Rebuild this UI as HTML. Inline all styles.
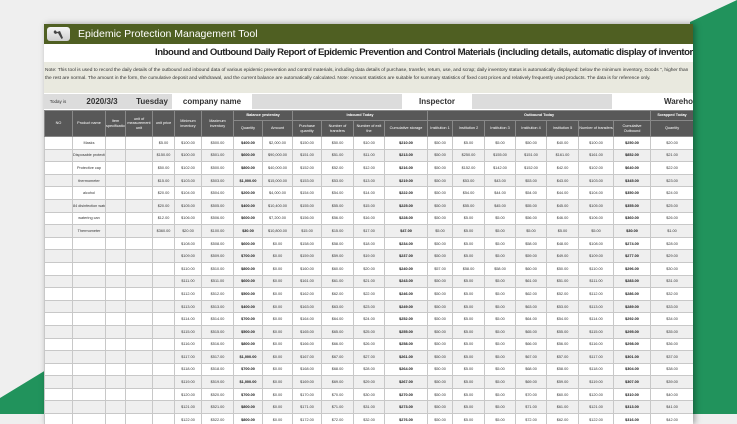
<!DOCTYPE html>
<html><head><meta charset="utf-8"><style>
body{margin:0;width:737px;height:414px;overflow:hidden;background:#efefef;font-family:"Liberation Sans",sans-serif;position:relative}
.g1{position:absolute;left:0;top:0;width:737px;height:414px}
.card{position:absolute;left:44px;top:24px;width:649px;height:400px;background:#fff;overflow:hidden;box-shadow:2px 0 6px rgba(0,0,0,.35)}
.bar{height:20px;background:#4f5f22;color:#fff;font-size:10.5px;line-height:20px;position:relative}
.bar .ic{position:absolute;left:3px;top:3px;width:23px;height:14px;background:linear-gradient(#f4f4f4,#cfcfcf);border-radius:3px}
.bar span{position:absolute;left:34px}
.title{height:18px;position:relative;overflow:hidden}
.title span{position:absolute;left:111px;top:0;font-weight:bold;font-size:9.6px;letter-spacing:-0.45px;line-height:18px;white-space:nowrap;color:#222;text-align:left}
.note{height:31px;background:#e9e9df;font-size:4.8px;line-height:8px;padding-top:5px;box-sizing:border-box;white-space:nowrap;color:#333;overflow:hidden;padding-left:1px}
.today{position:relative;height:16px;margin-top:1px;font-size:8px;font-weight:bold;color:#333}
.today div{position:absolute;top:0;height:15px;line-height:15px;background:#dcdcdc;text-align:center}
table{border-collapse:collapse;table-layout:fixed;width:649px;font-size:3.8px;color:#333}
td,th{border:1px solid #c8c8c8;text-align:center;padding:0;overflow:hidden;white-space:nowrap}
th{background:#585858;color:#fff;font-weight:normal;border-color:#888;line-height:4.5px;white-space:normal}
tbody tr{height:12.6px}
tbody tr:nth-child(even) td{background:#efefef}
b{font-weight:bold;color:#111}
</style></head><body>
<svg class="g1" viewBox="0 0 737 414"><polygon points="737,0 690,22 690,414 737,414" fill="#21935c"/><polygon points="0,414 0,398 46,370 46,414" fill="#21935c"/></svg>
<div class="card">
<div class="bar"><div class="ic"><svg width="23" height="14" viewBox="0 0 23 14"><path d="M8 3 L10 5 L13 4 L16 11 L14.5 12 L11 6 L8 7 L6.5 5 Z" fill="#444"/></svg></div><span>Epidemic Protection Management Tool</span></div>
<div class="title"><span>Inbound and Outbound Daily Report of Epidemic Prevention and Control Materials (including details, automatic display of inventory</span></div>
<div class="note">Note: This tool is used to record the daily details of the outbound and inbound data of various epidemic prevention and control materials, including data details of purchase, transfer, return, use, and scrap; daily inventory status is automatically displayed: below the minimum inventory, Goods ", higher than<br>the rest are normal. The amount in the form, the cumulative deposit and withdrawal, and the current balance are automatically calculated. Note: Amount statistics are suitable for summary statistics of fixed cost prices and relatively frequently used products. The data is for reference only.</div>
<div class="today">
<div style="left:0;width:28px;font-size:4.5px;font-weight:normal">Today is</div>
<div style="left:28px;width:60px">2020/3/3</div>
<div style="left:88px;width:40px;background:#dcdcdc">Tuesday</div>
<div style="left:128px;width:80px;background:#fff">company name</div>
<div style="left:208px;width:150px"></div>
<div style="left:358px;width:70px;background:#fff">Inspector</div>
<div style="left:428px;width:140px"></div>
<div style="left:568px;width:81px;background:#fff;text-align:right">Wareho</div>
</div>
<table>
<colgroup><col width="28"><col width="33"><col width="20"><col width="27"><col width="22"><col width="27"><col width="32"><col width="29"><col width="30"><col width="29"><col width="32"><col width="31"><col width="43"><col width="25"><col width="32"><col width="31"><col width="31"><col width="32"><col width="35"><col width="37"><col width="43"></colgroup>
<thead>
<tr style="height:10px"><th rowspan="2">NO</th><th rowspan="2">Product name</th><th rowspan="2">Item specifications</th><th rowspan="2">unit of measurement unit</th><th rowspan="2">unit price</th><th rowspan="2">Minimum inventory</th><th rowspan="2">Maximum inventory</th><th colspan="2"><b style="color:#fff">Balance yesterday</b></th><th colspan="4"><b style="color:#fff">Inbound Today</b></th><th colspan="7"><b style="color:#fff">Outbound Today</b></th><th><b style="color:#fff">Scrapped Today</b></th></tr>
<tr style="height:16px"><th>Quantity</th><th>Amount</th><th>Purchase quantity</th><th>Number of transfers</th><th>Number of exit the</th><th>Cumulative storage</th><th>Institution 1</th><th>Institution 2</th><th>Institution 3</th><th>Institution 4</th><th>Institution 5</th><th>Number of transfers</th><th>Cumulative Outbound</th><th>Quantity</th></tr>
</thead>
<tbody>
<tr><td></td><td>Masks</td><td></td><td></td><td>$5.00</td><td>$100.00</td><td>$500.00</td><td><b>$400.00</b></td><td>$2,000.00</td><td>$150.00</td><td>$50.00</td><td>$10.00</td><td><b>$210.00</b></td><td>$50.00</td><td>$5.00</td><td>$5.00</td><td>$50.00</td><td>$40.00</td><td>$100.00</td><td><b>$250.00</b></td><td>$20.00</td></tr>
<tr><td></td><td>Disposable protective</td><td></td><td></td><td>$150.00</td><td>$100.00</td><td>$501.00</td><td><b>$600.00</b></td><td>$90,000.00</td><td>$151.00</td><td>$51.00</td><td>$11.00</td><td><b>$213.00</b></td><td>$50.00</td><td>$250.00</td><td>$155.00</td><td>$151.00</td><td>$161.00</td><td>$161.00</td><td><b>$852.00</b></td><td>$21.00</td></tr>
<tr><td></td><td>Protective cap</td><td></td><td></td><td>$50.00</td><td>$102.00</td><td>$500.00</td><td><b>$800.00</b></td><td>$40,000.00</td><td>$152.00</td><td>$52.00</td><td>$12.00</td><td><b>$216.00</b></td><td>$50.00</td><td>$152.00</td><td>$142.00</td><td>$152.00</td><td>$42.00</td><td>$102.00</td><td><b>$640.00</b></td><td>$22.00</td></tr>
<tr><td></td><td>thermometer</td><td></td><td></td><td>$15.00</td><td>$103.00</td><td>$503.00</td><td><b>$1,000.00</b></td><td>$15,000.00</td><td>$153.00</td><td>$53.00</td><td>$13.00</td><td><b>$219.00</b></td><td>$50.00</td><td>$53.00</td><td>$43.00</td><td>$53.00</td><td>$43.00</td><td>$103.00</td><td><b>$345.00</b></td><td>$23.00</td></tr>
<tr><td></td><td>alcohol</td><td></td><td></td><td>$20.00</td><td>$104.00</td><td>$504.00</td><td><b>$200.00</b></td><td>$4,000.00</td><td>$154.00</td><td>$54.00</td><td>$14.00</td><td><b>$222.00</b></td><td>$50.00</td><td>$54.00</td><td>$44.00</td><td>$54.00</td><td>$44.00</td><td>$104.00</td><td><b>$350.00</b></td><td>$24.00</td></tr>
<tr><td></td><td>84 disinfection water</td><td></td><td></td><td>$20.00</td><td>$105.00</td><td>$505.00</td><td><b>$400.00</b></td><td>$10,400.00</td><td>$155.00</td><td>$55.00</td><td>$15.00</td><td><b>$225.00</b></td><td>$50.00</td><td>$55.00</td><td>$45.00</td><td>$55.00</td><td>$45.00</td><td>$105.00</td><td><b>$355.00</b></td><td>$25.00</td></tr>
<tr><td></td><td>watering can</td><td></td><td></td><td>$12.00</td><td>$106.00</td><td>$506.00</td><td><b>$600.00</b></td><td>$7,200.00</td><td>$156.00</td><td>$56.00</td><td>$16.00</td><td><b>$228.00</b></td><td>$50.00</td><td>$5.00</td><td>$5.00</td><td>$56.00</td><td>$46.00</td><td>$106.00</td><td><b>$360.00</b></td><td>$26.00</td></tr>
<tr><td></td><td>Thermometer</td><td></td><td></td><td>$360.00</td><td>$20.00</td><td>$100.00</td><td><b>$30.00</b></td><td>$10,800.00</td><td>$15.00</td><td>$15.00</td><td>$17.00</td><td><b>$47.00</b></td><td>$5.00</td><td>$5.00</td><td>$5.00</td><td>$5.00</td><td>$5.00</td><td>$5.00</td><td><b>$30.00</b></td><td>$1.00</td></tr>
<tr><td></td><td></td><td></td><td></td><td></td><td>$108.00</td><td>$508.00</td><td><b>$600.00</b></td><td>$0.00</td><td>$158.00</td><td>$58.00</td><td>$18.00</td><td><b>$234.00</b></td><td>$50.00</td><td>$5.00</td><td>$5.00</td><td>$58.00</td><td>$48.00</td><td>$108.00</td><td><b>$274.00</b></td><td>$28.00</td></tr>
<tr><td></td><td></td><td></td><td></td><td></td><td>$109.00</td><td>$509.00</td><td><b>$700.00</b></td><td>$0.00</td><td>$159.00</td><td>$59.00</td><td>$19.00</td><td><b>$237.00</b></td><td>$50.00</td><td>$5.00</td><td>$5.00</td><td>$59.00</td><td>$49.00</td><td>$109.00</td><td><b>$277.00</b></td><td>$29.00</td></tr>
<tr><td></td><td></td><td></td><td></td><td></td><td>$110.00</td><td>$510.00</td><td><b>$800.00</b></td><td>$0.00</td><td>$160.00</td><td>$60.00</td><td>$20.00</td><td><b>$240.00</b></td><td>$57.00</td><td>$58.00</td><td>$58.00</td><td>$60.00</td><td>$50.00</td><td>$110.00</td><td><b>$296.00</b></td><td>$30.00</td></tr>
<tr><td></td><td></td><td></td><td></td><td></td><td>$111.00</td><td>$511.00</td><td><b>$600.00</b></td><td>$0.00</td><td>$161.00</td><td>$61.00</td><td>$21.00</td><td><b>$243.00</b></td><td>$50.00</td><td>$5.00</td><td>$5.00</td><td>$61.00</td><td>$51.00</td><td>$111.00</td><td><b>$283.00</b></td><td>$31.00</td></tr>
<tr><td></td><td></td><td></td><td></td><td></td><td>$112.00</td><td>$512.00</td><td><b>$500.00</b></td><td>$0.00</td><td>$162.00</td><td>$62.00</td><td>$22.00</td><td><b>$246.00</b></td><td>$50.00</td><td>$5.00</td><td>$5.00</td><td>$62.00</td><td>$52.00</td><td>$112.00</td><td><b>$286.00</b></td><td>$32.00</td></tr>
<tr><td></td><td></td><td></td><td></td><td></td><td>$113.00</td><td>$513.00</td><td><b>$400.00</b></td><td>$0.00</td><td>$163.00</td><td>$63.00</td><td>$23.00</td><td><b>$249.00</b></td><td>$50.00</td><td>$5.00</td><td>$5.00</td><td>$63.00</td><td>$53.00</td><td>$113.00</td><td><b>$289.00</b></td><td>$33.00</td></tr>
<tr><td></td><td></td><td></td><td></td><td></td><td>$114.00</td><td>$514.00</td><td><b>$700.00</b></td><td>$0.00</td><td>$164.00</td><td>$64.00</td><td>$24.00</td><td><b>$252.00</b></td><td>$50.00</td><td>$5.00</td><td>$5.00</td><td>$64.00</td><td>$54.00</td><td>$114.00</td><td><b>$292.00</b></td><td>$34.00</td></tr>
<tr><td></td><td></td><td></td><td></td><td></td><td>$115.00</td><td>$515.00</td><td><b>$500.00</b></td><td>$0.00</td><td>$165.00</td><td>$65.00</td><td>$25.00</td><td><b>$255.00</b></td><td>$50.00</td><td>$5.00</td><td>$5.00</td><td>$65.00</td><td>$55.00</td><td>$115.00</td><td><b>$295.00</b></td><td>$35.00</td></tr>
<tr><td></td><td></td><td></td><td></td><td></td><td>$116.00</td><td>$516.00</td><td><b>$800.00</b></td><td>$0.00</td><td>$166.00</td><td>$66.00</td><td>$26.00</td><td><b>$258.00</b></td><td>$50.00</td><td>$5.00</td><td>$5.00</td><td>$66.00</td><td>$56.00</td><td>$116.00</td><td><b>$298.00</b></td><td>$36.00</td></tr>
<tr><td></td><td></td><td></td><td></td><td></td><td>$117.00</td><td>$517.00</td><td><b>$1,000.00</b></td><td>$0.00</td><td>$167.00</td><td>$67.00</td><td>$27.00</td><td><b>$261.00</b></td><td>$50.00</td><td>$5.00</td><td>$5.00</td><td>$67.00</td><td>$57.00</td><td>$117.00</td><td><b>$301.00</b></td><td>$37.00</td></tr>
<tr><td></td><td></td><td></td><td></td><td></td><td>$118.00</td><td>$518.00</td><td><b>$700.00</b></td><td>$0.00</td><td>$168.00</td><td>$68.00</td><td>$28.00</td><td><b>$264.00</b></td><td>$50.00</td><td>$5.00</td><td>$5.00</td><td>$68.00</td><td>$58.00</td><td>$118.00</td><td><b>$304.00</b></td><td>$38.00</td></tr>
<tr><td></td><td></td><td></td><td></td><td></td><td>$119.00</td><td>$519.00</td><td><b>$1,000.00</b></td><td>$0.00</td><td>$169.00</td><td>$69.00</td><td>$29.00</td><td><b>$267.00</b></td><td>$50.00</td><td>$5.00</td><td>$5.00</td><td>$69.00</td><td>$59.00</td><td>$119.00</td><td><b>$307.00</b></td><td>$39.00</td></tr>
<tr><td></td><td></td><td></td><td></td><td></td><td>$120.00</td><td>$520.00</td><td><b>$700.00</b></td><td>$0.00</td><td>$170.00</td><td>$70.00</td><td>$30.00</td><td><b>$270.00</b></td><td>$50.00</td><td>$5.00</td><td>$5.00</td><td>$70.00</td><td>$60.00</td><td>$120.00</td><td><b>$310.00</b></td><td>$40.00</td></tr>
<tr><td></td><td></td><td></td><td></td><td></td><td>$121.00</td><td>$521.00</td><td><b>$800.00</b></td><td>$0.00</td><td>$171.00</td><td>$71.00</td><td>$31.00</td><td><b>$273.00</b></td><td>$50.00</td><td>$5.00</td><td>$5.00</td><td>$71.00</td><td>$61.00</td><td>$121.00</td><td><b>$313.00</b></td><td>$41.00</td></tr>
<tr><td></td><td></td><td></td><td></td><td></td><td>$122.00</td><td>$522.00</td><td><b>$800.00</b></td><td>$0.00</td><td>$172.00</td><td>$72.00</td><td>$32.00</td><td><b>$276.00</b></td><td>$50.00</td><td>$5.00</td><td>$5.00</td><td>$72.00</td><td>$62.00</td><td>$122.00</td><td><b>$316.00</b></td><td>$42.00</td></tr>
</tbody></table>
</div>
</body></html>
